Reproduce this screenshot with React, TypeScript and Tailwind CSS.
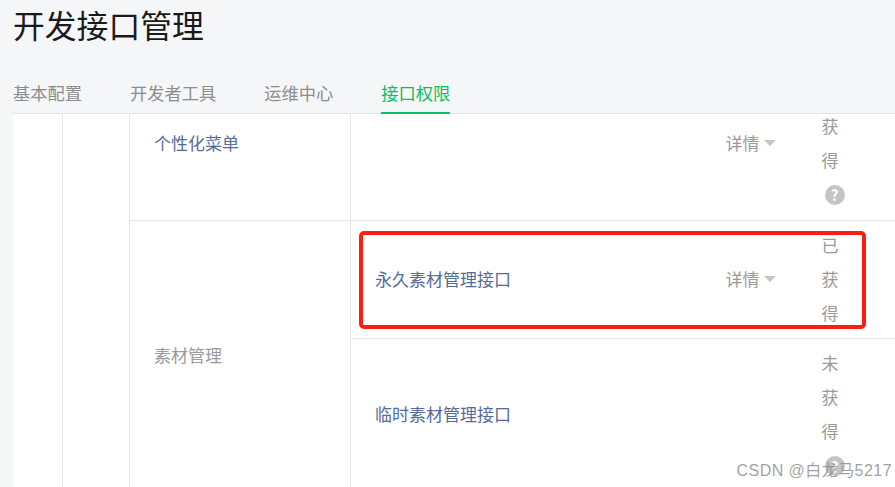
const font = { fontFamily: '"Noto Sans CJK SC", "Liberation Sans", sans-serif' };

const tabs = ["基本配置", "开发者工具", "运维中心", "接口权限"];

function HelpIcon() {
  return (
    <span className="mt-[7px] mb-[5px] ml-[3px] flex h-[22px] w-[20px] shrink-0 items-center justify-center">
      <span className="flex h-[20px] w-[20px] items-center justify-center rounded-full bg-[#c4c4c4] text-[15px] leading-none font-bold text-white">
        ?
      </span>
    </span>
  );
}

function Caret() {
  return <span className="ml-[4px] h-0 w-0 border-x-[6px] border-t-[6px] border-x-transparent border-t-[#c4c4c4]" />;
}

interface RowProps {
  name?: string;
  chars: string[];
  help?: boolean;
  detail?: boolean;
  height: string;
  last?: boolean;
}

function ApiRow({ name, chars, help, detail, height, last }: RowProps) {
  return (
    <div className={`flex items-center pb-[2px] ${height} ${last ? "" : "border-b border-[#e4e6e9]"}`}>
      <div className="flex-1 pl-6 text-[#576b95]">{name}</div>
      <div className="flex w-[50px] items-center text-[#9a9a9a]">
        {detail && "详情"}
        {detail && <Caret />}
      </div>
      <div className="mr-[56.5px] ml-[46px] flex w-[17px] flex-col leading-[34px] text-[#9a9a9a]">
        {chars.map((c, i) => (
          <span key={i}>{c}</span>
        ))}
        {help && <HelpIcon />}
      </div>
    </div>
  );
}

export default function App() {
  return (
    <div className="relative flex h-[487px] w-[895px] flex-col overflow-hidden bg-[#f5f6f8] pl-[13px]" style={font}>
      <h1 className="mt-[1px] text-[31.8px] leading-[46px] font-normal text-[#1a1a1a]">开发接口管理</h1>

      <div className="mt-[26px] flex h-[41px] gap-12 border-b border-[#e2e3e6] text-[17.25px] leading-[39px] text-[#8d8d8d]">
        {tabs.map((t, i) => (
          <div key={t} className={i === 3 ? "h-[41px] border-b-2 border-[#07c160] text-[#07c160]" : ""}>
            {t}
          </div>
        ))}
      </div>

      <div className="min-h-0 flex-1 overflow-hidden bg-white text-[17px]">
        <div className="-mt-[47px] flex">
          <div className="w-[50px] shrink-0 border-r border-[#e4e6e9]" />
          <div className="w-[67px] shrink-0 border-r border-[#e4e6e9]" />
          <div className="min-w-0 flex-1">
            <div className="flex h-[154px] border-b border-[#e4e6e9]">
              <div className="flex w-[221px] shrink-0 items-center border-r border-[#e4e6e9] pb-[2px] pl-6 text-[#576b95]">
                个性化菜单
              </div>
              <div className="flex-1">
                <ApiRow chars={["未", "获", "得"]} help detail height="h-[153px]" last />
              </div>
            </div>
            <div className="flex">
              <div className="flex w-[221px] shrink-0 items-center border-r border-[#e4e6e9] pb-[2px] pl-6 text-[#9a9a9a]">
                素材管理
              </div>
              <div className="flex-1">
                <ApiRow name="永久素材管理接口" chars={["已", "获", "得"]} detail height="h-[118px]" />
                <ApiRow name="临时素材管理接口" chars={["未", "获", "得"]} help height="h-[152px]" last />
              </div>
            </div>
          </div>
        </div>
      </div>

      <div className="absolute top-[231px] left-[359px] h-[98px] w-[507px] rounded-[5px] border-[4px] border-[#fb1f12]" />
      <div className="absolute top-[461px] right-[3px] text-[16px] leading-[20px] tracking-[0.45px] text-[#8f8f8f]/85" style={{ fontFamily: '"Liberation Sans", "Noto Sans CJK SC", sans-serif' }}>
        CSDN @白龙马5217
      </div>
    </div>
  );
}
